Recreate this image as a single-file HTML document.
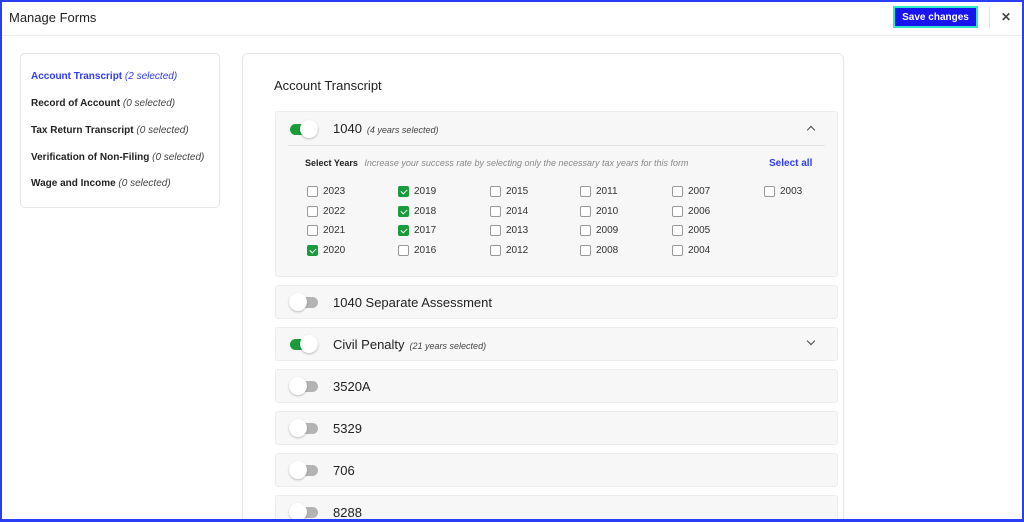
<!DOCTYPE html>
<html style="overflow:hidden;width:1024px;height:522px"><head><style>
*{box-sizing:border-box;margin:0;padding:0}
body{width:1024px;height:522px;overflow:hidden;font-family:"Liberation Sans",sans-serif;color:#222;background:#fff;position:relative}
.frame{position:absolute;left:0;top:0;width:1024px;height:522px;border:2px solid #2a3ff5;border-bottom-width:3px;pointer-events:none;z-index:9}
.hdr{position:absolute;left:0;top:0;width:1024px;height:36px;border-bottom:1px solid #eee}
.title{position:absolute;left:9px;top:10px;font-size:13px;color:#222}
.save{position:absolute;left:893px;top:6px;width:85px;height:22px;background:#1a14f2;border:2px solid #2ee6c8;color:#fff;font-size:10px;font-weight:bold;display:flex;align-items:center;justify-content:center}
.sep{position:absolute;left:989px;top:7px;width:1px;height:21px;background:#e2e2e2}
.x{position:absolute;left:1001px;top:10px;font-size:12px;color:#444;font-weight:bold}
.side{position:absolute;left:20px;top:53px;width:200px;height:155px;border:1px solid #e6e6e6;border-radius:5px}
.side div{position:absolute;left:10px;font-size:10px;font-weight:bold;color:#222}
.side i{font-weight:normal;color:#444}
.side .a{color:#2f3cf0}.side .a i{color:#2f3cf0}
.card{position:absolute;left:242px;top:53px;width:602px;height:480px;border:1px solid #e6e6e6;border-radius:6px}
.h2{position:absolute;left:274px;top:78px;font-size:13px;color:#222}
.row{position:absolute;left:275px;width:563px;background:#f7f7f7;border:1px solid #ececec;border-radius:3px}
.tg{position:absolute;left:14px;width:28px;height:11px;border-radius:6px;background:#b3b3b3}
.tg::after{content:"";position:absolute;top:-4px;left:-1px;width:18px;height:18px;border-radius:50%;background:#fff;box-shadow:0 1px 2px rgba(0,0,0,.25)}
.tg.on{background:#1a9c3c}.tg.on::after{left:10px}
.lbl{position:absolute;left:57px;font-size:13px;color:#222}
.lbl i{font-size:9px;color:#444;margin-left:5px}
.cb{position:absolute;width:11px;height:11px;border:1px solid #999;border-radius:2px;background:#fff}
.cb.c{background:#1a9c3c;border-color:#1a9c3c}
.cb.c::after{content:"";position:absolute;left:3px;top:1px;width:3px;height:5px;border:solid #fff;border-width:0 1.5px 1.5px 0;transform:rotate(45deg)}
.yr{position:absolute;font-size:10px;color:#333}
.chev{position:absolute;width:6px;height:6px;border:solid #444;border-width:1.5px 1.5px 0 0}
</style></head><body>
<div class="frame"></div>
<div class="hdr"><div class="title">Manage Forms</div><div class="save">Save changes</div><div class="sep"></div><div class="x">✕</div></div>
<div class="side">
<div class="a" style="top:17px">Account Transcript <i>(2 selected)</i></div>
<div style="top:44px">Record of Account <i>(0 selected)</i></div>
<div style="top:71px">Tax Return Transcript <i>(0 selected)</i></div>
<div style="top:98px">Verification of Non-Filing <i>(0 selected)</i></div>
<div style="top:124px">Wage and Income <i>(0 selected)</i></div>
</div>
<div class="card"></div>
<div class="h2">Account Transcript</div>
<div class="row" style="top:111px;height:166px">
<div class="tg on" style="top:12px"></div>
<div class="lbl" style="top:9px">1040<i>(4 years selected)</i></div>
<div class="chev" style="left:532px;top:15px;transform:rotate(-45deg)"></div>
<div style="position:absolute;left:12px;right:12px;top:33px;height:1px;background:#e4e4e4"></div>
<div style="position:absolute;left:29px;top:46px;font-size:9px;font-weight:bold;color:#222">Select Years <i style="font-weight:normal;color:#888;margin-left:4px">Increase your success rate by selecting only the necessary tax years for this form</i></div>
<div style="position:absolute;left:493px;top:46px;font-size:10px;font-weight:bold;color:#2f3cf0">Select all</div>
</div>
<div id="g"></div>
<div class="row" style="top:285px;height:34px"><div class="tg" style="top:11px"></div><div class="lbl" style="top:9px">1040 Separate Assessment</div></div>
<div class="row" style="top:327px;height:34px"><div class="tg on" style="top:11px"></div><div class="lbl" style="top:9px">Civil Penalty<i>(21 years selected)</i></div><div class="chev" style="left:532px;top:10px;transform:rotate(135deg)"></div></div>
<div class="row" style="top:369px;height:34px"><div class="tg" style="top:11px"></div><div class="lbl" style="top:9px">3520A</div></div>
<div class="row" style="top:411px;height:34px"><div class="tg" style="top:11px"></div><div class="lbl" style="top:9px">5329</div></div>
<div class="row" style="top:453px;height:34px"><div class="tg" style="top:11px"></div><div class="lbl" style="top:9px">706</div></div>
<div class="row" style="top:495px;height:34px"><div class="tg" style="top:11px"></div><div class="lbl" style="top:9px">8288</div></div>
<script>
var cols=[307,398,490,580,672,764],ys=[191,211,230,250];
var d=[["2023","2022","2021","2020"],["2019","2018","2017","2016"],["2015","2014","2013","2012"],["2011","2010","2009","2008"],["2007","2006","2005","2004"],["2003"]];
var chk={"2019":1,"2018":1,"2017":1,"2020":1},h="";
d.forEach(function(c,i){c.forEach(function(y,j){h+='<div class="cb'+(chk[y]?' c':'')+'" style="left:'+cols[i]+'px;top:'+(ys[j]-5)+'px"></div><div class="yr" style="left:'+(cols[i]+16)+'px;top:'+(ys[j]-5)+'px">'+y+'</div>';});});
document.getElementById("g").innerHTML=h;
</script>
</body></html>
